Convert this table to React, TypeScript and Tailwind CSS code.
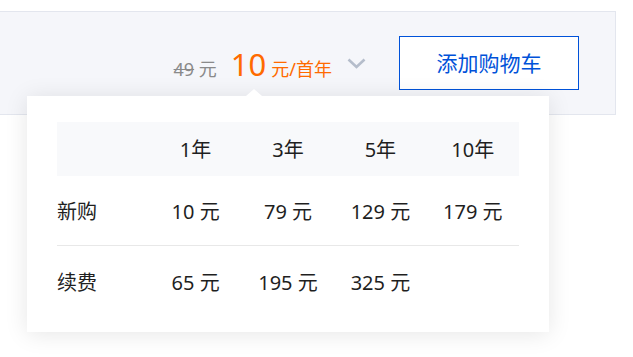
import React from "react";

const font = { fontFamily: '"Noto Sans", "Noto Sans CJK SC", sans-serif' };

const years = ["1年", "3年", "5年", "10年"];
const rows: { label: string; vals: string[] }[] = [
  { label: "新购", vals: ["10 元", "79 元", "129 元", "179 元"] },
  { label: "续费", vals: ["65 元", "195 元", "325 元", ""] },
];

export default function App() {
  return (
    <div className="relative w-[633px] h-[357px] bg-white overflow-hidden" style={font}>
      <div className="mt-[11px] mr-[17px] h-[104px] border-t border-r border-b border-[#e3e6ee] bg-[#f5f6fa] flex items-center justify-end pr-[36px]">
        <div className="flex items-baseline mt-[2px]">
          <span className="text-[18px] text-[#8a8a8a] leading-none">
            <span className="line-through">49</span> 元
          </span>
          <span className="ml-[14px] text-[31px] text-[#ff6a00] leading-none">10</span>
          <span className="ml-[5px] text-[18px] text-[#ff6a00] leading-none">元/首年</span>
        </div>
        <svg className="ml-[15px] mt-[1px]" width="19" height="11" viewBox="0 0 19 11">
          <path d="M1.5 1.5 L9.5 9 L17.5 1.5" fill="none" stroke="#b5bdcb" strokeWidth="2.6" />
        </svg>
        <button className="ml-[33px] w-[180px] h-[54px] border border-[#0052d9] bg-white text-[#0052d9] text-[21px] leading-none flex items-center justify-center">
          添加购物车
        </button>
      </div>

      <div className="absolute left-[27px] top-[96px] w-[522px] h-[236px] bg-white shadow-[0_2px_22px_rgba(0,0,0,0.10)] px-[30px] pt-[26px]">
        <div className="absolute left-[219px] -top-[7px] w-0 h-0 border-l-[8px] border-r-[8px] border-b-[7px] border-l-transparent border-r-transparent border-b-white" />
        <div className="grid grid-cols-5 h-[54px] items-center bg-[#f8f9fb] text-[20px] text-[#1f1f1f] pt-[1px]">
          <div />
          {years.map((y) => (
            <div key={y} className="text-center">{y}</div>
          ))}
        </div>
        {rows.map((r, i) => (
          <div
            key={r.label}
            className={`grid grid-cols-5 h-[70px] items-center text-[20px] text-[#1f1f1f] ${i === 0 ? "border-b border-[#e8e8e8] pt-[2px]" : "pt-[4px]"}`}
          >
            <div>{r.label}</div>
            {r.vals.map((v, j) => (
              <div key={j} className="text-center">{v}</div>
            ))}
          </div>
        ))}
      </div>
    </div>
  );
}
